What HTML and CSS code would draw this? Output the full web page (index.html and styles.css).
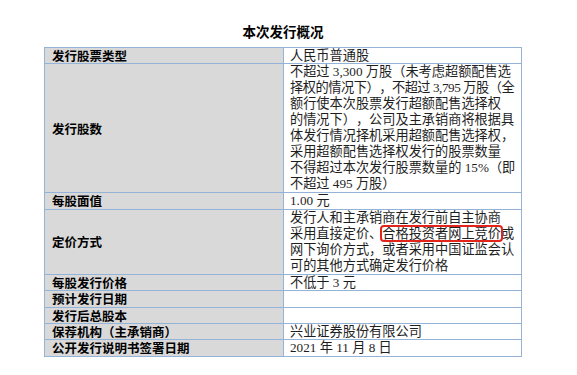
FILE: index.html
```html
<!DOCTYPE html>
<html lang="zh-CN">
<head>
<meta charset="utf-8">
<title>本次发行概况</title>
<link rel="stylesheet" href="styles.css">
</head>
<body>
<div class="page">
  <h1 class="title">本次发行概况</h1>
  <table class="overview">
    <colgroup><col class="c-label"><col class="c-value"></colgroup>
    <tr>
      <td class="label">发行股票类型</td>
      <td class="value">人民币普通股</td>
    </tr>
    <tr class="multi">
      <td class="label">发行股数</td>
      <td class="value">不超过 3,300 万股（未考虑超额配售选<br><span class="tight">择权的情况下），不超过 3,795 万股（全</span><br>额行使本次股票发行超额配售选择权<br>的情况下），公司及主承销商将根据具<br>体发行情况择机采用超额配售选择权，<br>采用超额配售选择权发行的股票数量<br>不得超过本次发行股票数量的 15%（即<br>不超过 495 万股）</td>
    </tr>
    <tr>
      <td class="label">每股面值</td>
      <td class="value">1.00 元</td>
    </tr>
    <tr class="multi">
      <td class="label">定价方式</td>
      <td class="value">发行人和主承销商在发行前自主协商<br>采用直接定价、<span class="mark">合格投资者网上竞价</span>或<br>网下询价方式，或者采用中国证监会认<br>可的其他方式确定发行价格</td>
    </tr>
    <tr>
      <td class="label">每股发行价格</td>
      <td class="value">不低于 3 元</td>
    </tr>
    <tr>
      <td class="label">预计发行日期</td>
      <td class="value"></td>
    </tr>
    <tr>
      <td class="label">发行后总股本</td>
      <td class="value"></td>
    </tr>
    <tr>
      <td class="label">保荐机构（主承销商）</td>
      <td class="value">兴业证券股份有限公司</td>
    </tr>
    <tr>
      <td class="label">公开发行说明书签署日期</td>
      <td class="value">2021 年 11 月 8 日</td>
    </tr>
  </table>
</div>
</body>
</html>
```
FILE: styles.css
```css
html, body {
  margin: 0;
  padding: 0;
  background: #ffffff;
}

.page {
  width: 478px;
  margin-left: 44px;
}

.title {
  margin: 23px 0 8px;
  text-align: center;
  font-family: "Noto Sans CJK SC", sans-serif;
  font-weight: 700;
  font-size: 13.5px;
  line-height: 16px;
  color: #000000;
}

.overview {
  width: 478px;
  border-collapse: collapse;
  table-layout: fixed;
  text-spacing-trim: space-all;
}

.c-label {
  width: 239px;
}

.overview td {
  border: 1px solid #95b3d7;
  padding: 0;
  height: 15.4px;
  line-height: 15.4px;
  vertical-align: middle;
}

.label {
  background: #d9d9d9;
  padding-left: 7px !important;
  font-family: "Noto Sans CJK SC", sans-serif;
  font-weight: 700;
  font-size: 12.5px;
  color: #000000;
  white-space: nowrap;
}

.value {
  padding-left: 6px !important;
  font-family: "Liberation Serif", "Noto Sans CJK SC", serif;
  font-size: 13.2px;
  color: #1e1e1e;
  white-space: nowrap;
}

.multi .value {
  line-height: 16px;
}

.tight {
  letter-spacing: -0.45px;
}

.mark {
  position: relative;
}

.mark::after {
  content: "";
  position: absolute;
  left: -2px;
  right: -2px;
  top: -1px;
  bottom: -1px;
  border: 2px solid #e3241b;
  border-radius: 4px;
}
```
